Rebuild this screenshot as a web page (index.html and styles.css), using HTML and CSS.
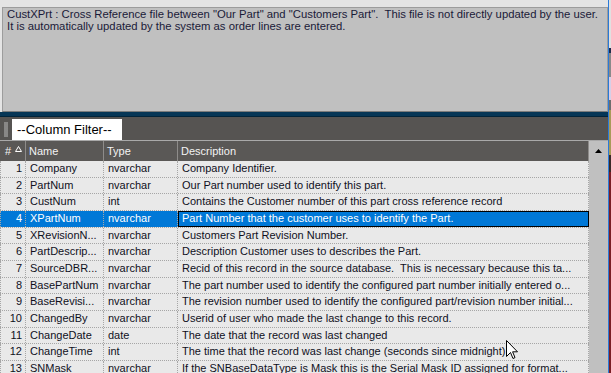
FILE: index.html
```html
<!DOCTYPE html>
<html lang="en">
<head>
    <meta charset="UTF-8">
    <meta name="viewport" content="width=device-width, initial-scale=1.0">
    <title>CustXPrt - Data Dictionary</title>
    <link rel="stylesheet" href="styles.css">
</head>
<body>
    <div class="screen">
        <div class="window">
            <div class="info">
                <p>CustXPrt : Cross Reference file between "Our Part" and "Customers Part".&nbsp; This file is not directly updated by the user.</p>
                <p>It is automatically updated by the system as order lines are entered.</p>
            </div>
            <div class="splitter"></div>
            <div class="toolbar">
                <span class="grip"></span>
                <div class="filter">--Column Filter--</div>
            </div>
            <div class="grid-wrap">
                <div class="grid">
                    <div class="row head">
                        <div class="cell num-head">#<svg class="sort" width="7" height="6" viewBox="0 0 7 6"><polygon points="3.5,0.5 6.5,5.5 0.5,5.5" fill="none" stroke="#fff" stroke-width="1"/></svg></div>
                        <div class="cell">Name</div>
                        <div class="cell">Type</div>
                        <div class="cell">Description</div>
                    </div>
                    <div class="row">
                        <div class="cell num">1</div>
                        <div class="cell">Company</div>
                        <div class="cell">nvarchar</div>
                        <div class="cell desc">Company Identifier.</div>
                    </div>
                    <div class="row">
                        <div class="cell num">2</div>
                        <div class="cell">PartNum</div>
                        <div class="cell">nvarchar</div>
                        <div class="cell desc">Our Part number used to identify this part.</div>
                    </div>
                    <div class="row">
                        <div class="cell num">3</div>
                        <div class="cell">CustNum</div>
                        <div class="cell">int</div>
                        <div class="cell desc">Contains the Customer number of this part cross reference record</div>
                    </div>
                    <div class="row sel">
                        <div class="cell num">4</div>
                        <div class="cell">XPartNum</div>
                        <div class="cell">nvarchar</div>
                        <div class="cell desc">Part Number that the customer uses to identify the Part.</div>
                    </div>
                    <div class="row">
                        <div class="cell num">5</div>
                        <div class="cell">XRevisionN...</div>
                        <div class="cell">nvarchar</div>
                        <div class="cell desc">Customers Part Revision Number.</div>
                    </div>
                    <div class="row">
                        <div class="cell num">6</div>
                        <div class="cell">PartDescrip...</div>
                        <div class="cell">nvarchar</div>
                        <div class="cell desc">Description Customer uses to describes the Part.</div>
                    </div>
                    <div class="row">
                        <div class="cell num">7</div>
                        <div class="cell">SourceDBR...</div>
                        <div class="cell">nvarchar</div>
                        <div class="cell desc">Recid of this record in the source database.&nbsp; This is necessary because this ta...</div>
                    </div>
                    <div class="row">
                        <div class="cell num">8</div>
                        <div class="cell">BasePartNum</div>
                        <div class="cell">nvarchar</div>
                        <div class="cell desc">The part number used to identify the configured part number initially entered o...</div>
                    </div>
                    <div class="row">
                        <div class="cell num">9</div>
                        <div class="cell">BaseRevisi...</div>
                        <div class="cell">nvarchar</div>
                        <div class="cell desc">The revision number used to identify the configured part/revision number initial...</div>
                    </div>
                    <div class="row">
                        <div class="cell num">10</div>
                        <div class="cell">ChangedBy</div>
                        <div class="cell">nvarchar</div>
                        <div class="cell desc">Userid of user who made the last change to this record.</div>
                    </div>
                    <div class="row">
                        <div class="cell num">11</div>
                        <div class="cell">ChangeDate</div>
                        <div class="cell">date</div>
                        <div class="cell desc">The date that the record was last changed</div>
                    </div>
                    <div class="row">
                        <div class="cell num">12</div>
                        <div class="cell">ChangeTime</div>
                        <div class="cell">int</div>
                        <div class="cell desc">The time that the record was last change (seconds since midnight)</div>
                    </div>
                    <div class="row">
                        <div class="cell num">13</div>
                        <div class="cell">SNMask</div>
                        <div class="cell">nvarchar</div>
                        <div class="cell desc">If the SNBaseDataType is Mask this is the Serial Mask ID assigned for format...</div>
                    </div>
                </div>
                <div class="vscroll">
                    <svg width="7" height="4" viewBox="0 0 7 4"><polygon points="3.5,0 7,4 0,4" fill="#000"/></svg>
                </div>
            </div>
        </div>
        <div class="desk"></div>
        <svg class="cursor" width="12" height="21" viewBox="0 0 12 21">
            <path d="M0.5 0.5 L0.5 16.5 L4.5 12.5 L7 18.5 L9 17.6 L6.6 11.8 L11.5 11.8 Z" fill="#fff" stroke="#000" stroke-width="1" stroke-linejoin="miter"/>
        </svg>
    </div>
</body>
</html>
```

FILE: styles.css
```css
body {
    margin: 0;
    background: #e6e6e6;
    font-family: "Liberation Sans", Arial, sans-serif;
}
.screen {
    position: relative;
    display: flex;
    width: 611px;
    height: 373px;
    overflow: hidden;
}
.window {
    width: 608px;
    display: flex;
    flex-direction: column;
    padding-top: 7px;
    box-sizing: border-box;
    background: #e4e4e4;
}
.info {
    height: 105px;
    margin-left: 2px;
    padding: 0 4px;
    box-sizing: border-box;
    border: 1px solid #9c9c9c;
    border-bottom-color: #7c7c7c;
    background: #c0c0c0;
    color: #1a1a38;
    font-size: 11.3px;
    line-height: 12.4px;
}
.info p {
    margin: 0;
    white-space: nowrap;
}
.splitter {
    height: 4px;
    background: #063656;
    border-bottom: 1px solid #02243a;
}
.toolbar {
    height: 23px;
    display: flex;
    align-items: flex-start;
    gap: 4px;
    padding: 2px 0 0 4px;
    box-sizing: border-box;
    background: #565452;
}
.grip {
    width: 4px;
    height: 15px;
    margin-top: 3px;
    background-image: radial-gradient(circle, #a4a4a4 0.6px, transparent 0.9px);
    background-size: 2px 2px;
}
.filter {
    width: 110px;
    height: 21px;
    padding: 1px 0 0 5px;
    box-sizing: border-box;
    background: #fff;
    color: #000;
    font-size: 13px;
    line-height: 20px;
    white-space: nowrap;
}
.grid-wrap {
    flex: 1;
    display: flex;
    min-height: 0;
}
.grid {
    width: 589px;
    overflow: hidden;
    background: #e9e9e9;
}
.row {
    display: grid;
    grid-template-columns: 26px 78px 74px 411px;
    height: 16.667px;
    box-sizing: border-box;
    border-bottom: 1px dotted #a6a6a6;
    color: #10101c;
    font-size: 11px;
    line-height: 15px;
}
.cell {
    padding-left: 4px;
    border-right: 1px dotted #a6a6a6;
    overflow: hidden;
    white-space: nowrap;
}
.num {
    padding: 0 3px 0 0;
    border-left: 1px dotted #a6a6a6;
    text-align: right;
}
.head {
    height: 21px;
    border-top: 1px solid #a9a9a9;
    border-bottom: none;
    background: #5a5856;
    color: #f3f3f3;
    line-height: 20px;
}
.head .cell {
    padding-left: 3px;
    border-right: 1px solid #8e8c8a;
}
.head .num-head {
    padding-left: 5px;
}
.sort {
    margin-left: 4px;
    vertical-align: 3px;
}
.sel .cell {
    background: #0078d7;
    color: #fff;
}
.sel .desc {
    outline: 1px solid #000;
    outline-offset: -1px;
}
.vscroll {
    width: 19px;
    padding-top: 8px;
    box-sizing: border-box;
    display: flex;
    justify-content: center;
    align-items: flex-start;
    background: #c0c0c0;
    border-top: 1px solid #a9a9a9;
}
.desk {
    width: 3px;
    background: linear-gradient(#e0e0e0 0 48px, #1e2c4c 48px 53px, #8a8a8a 53px 77px, #d6cfe6 77px 100px, #6e6e6e 100px 110px, #a89a5a 110px 155px, #3a2a28 155px 172px, #7a1e26 172px);
    box-shadow: inset 1px 0 0 #2a7ad8;
}
.cursor {
    position: absolute;
    left: 506px;
    top: 340px;
}
```
